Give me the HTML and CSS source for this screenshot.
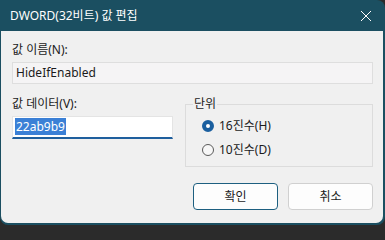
FILE: index.html
```html
<!DOCTYPE html>
<html lang="ko">
<head>
<meta charset="utf-8">
<title>DWORD(32비트) 값 편집</title>
<link rel="stylesheet" href="styles.css">
</head>
<body>
<div class="window">
  <div class="titlebar">
    <span class="title">DWORD(32비트) 값 편집</span>
    <svg class="close" width="12" height="12" viewBox="0 0 12 12"><path d="M1 1 L11 11 M11 1 L1 11" stroke="#ffffff" stroke-width="1" fill="none"/></svg>
  </div>
  <div class="content">
    <div class="label">값 이름(N):</div>
    <div class="namebox">HideIfEnabled</div>
    <div class="row">
      <div class="datacol">
        <div class="label">값 데이터(V):</div>
        <div class="databox"><span class="sel">22ab9b9</span></div>
      </div>
      <fieldset class="group">
        <legend class="legend">단위</legend>
        <div class="radio"><span class="dot on"></span><span>16진수(H)</span></div>
        <div class="radio"><span class="dot"></span><span>10진수(D)</span></div>
      </fieldset>
    </div>
    <div class="buttons">
      <div class="btn default">확인</div>
      <div class="btn">취소</div>
    </div>
  </div>
</div>
</body>
</html>
```
FILE: styles.css
```css
html, body {
  margin: 0;
  padding: 0;
  background: #2b2b2b;
}
body {
  width: 385px;
  height: 225px;
  overflow: hidden;
  font-family: "Noto Sans", "Noto Sans CJK KR", sans-serif;
  font-size: 12px;
  color: #1b1b1b;
}
.window {
  width: 385px;
  height: 225px;
  box-sizing: border-box;
  background: #1b4f61;
  padding: 0 2px 2px 1px;
  border-radius: 0 8px 8px 8px;
  display: flex;
  flex-direction: column;
}
.titlebar {
  height: 31px;
  flex: none;
  display: flex;
  align-items: center;
  justify-content: space-between;
  padding: 0 11px 0 9px;
}
.title {
  color: #ffffff;
  font-size: 12px;
  line-height: 16px;
}
.close {
  display: block;
}
.content {
  flex: 1;
  background: #f0f0f0;
  border-radius: 0 0 7px 7px;
  padding: 11px 10px 0 11px;
}
.label {
  line-height: 16px;
  height: 16px;
  white-space: nowrap;
}
.namebox {
  margin-top: 4px;
  height: 22px;
  box-sizing: border-box;
  border: 1px solid #dedede;
  background: #f5f4f5;
  line-height: 20px;
  padding-left: 3px;
}
.row {
  display: flex;
  gap: 12px;
  margin-top: 12px;
}
.datacol {
  width: 161px;
}
.databox {
  margin-top: 4px;
  height: 23px;
  box-sizing: border-box;
  background: #ffffff;
  border: 1px solid #e4e4e4;
  border-bottom: 2px solid #1f5f9e;
  padding: 1px 0 0 2px;
}
.sel {
  display: inline-block;
  background: #3b80d6;
  color: #ffffff;
  line-height: 17px;
  padding: 0 1px;
}
.group {
  margin: 0;
  width: 188px;
  height: 71px;
  box-sizing: border-box;
  border: 1px solid #dcdcdc;
  padding: 6px 0 0 16px;
}
.legend {
  padding: 0 1px;
  margin-left: -9px;
  line-height: 16px;
}
.radio {
  display: flex;
  align-items: center;
  gap: 5px;
  height: 16px;
  line-height: 16px;
  margin-bottom: 8px;
}
.dot {
  width: 12px;
  height: 12px;
  box-sizing: border-box;
  border-radius: 50%;
  border: 1px solid #5a5a5a;
  background: #f7f7f7;
  flex: none;
}
.dot.on {
  border: 4px solid #1a5f9f;
  background: #ffffff;
}
.buttons {
  display: flex;
  justify-content: flex-end;
  gap: 10px;
  margin-top: 16px;
}
.btn {
  width: 85px;
  height: 27px;
  box-sizing: border-box;
  border: 1px solid #d0d0d0;
  border-radius: 4px;
  background: #fdfdfd;
  text-align: center;
  line-height: 25px;
}
.btn.default {
  border-color: #1d5f80;
}
```
